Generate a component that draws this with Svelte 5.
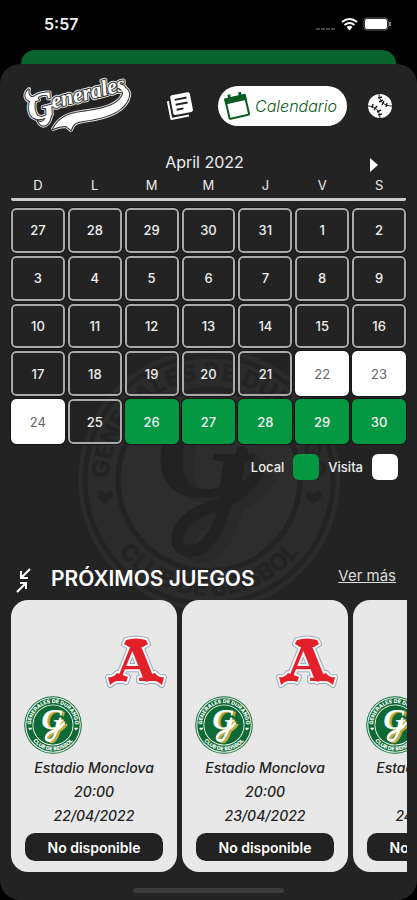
<script>
    const weekdays = ["D", "L", "M", "M", "J", "V", "S"];

    const prevMonth = [27, 28, 29, 30, 31];
    const days = [...prevMonth, ...Array.from({ length: 30 }, (_, i) => i + 1)].map(
        (num, i) => ({ num, type: i < prevMonth.length ? "" : gameType(num) })
    );

    function gameType(num) {
        if (num >= 22 && num <= 24) return "visita";
        if (num >= 26) return "local";
        return "";
    }

    const games = [
        { place: "Estadio Monclova", time: "20:00", date: "22/04/2022" },
        { place: "Estadio Monclova", time: "20:00", date: "23/04/2022" },
        { place: "Estadio Monclova", time: "20:00", date: "24/04/2022" },
    ];
</script>

{#snippet badge(id)}
    <svg class="badge" viewBox="0 0 264 264" aria-hidden="true">
        <defs>
            <path id="{id}-top" d="M32 132a100 100 0 0 1 200 0" />
            <path id="{id}-bottom" d="M16 132a116 116 0 0 0 232 0" />
        </defs>
        <circle class="base" cx="132" cy="132" r="131" />
        <circle class="line" cx="132" cy="132" r="124" />
        <circle class="line" cx="132" cy="132" r="91" />
        <circle class="core" cx="132" cy="132" r="88" />
        <text class="ring"><textPath href="#{id}-top" startOffset="50%">GENERALES DE DURANGO</textPath></text>
        <text class="ring"><textPath href="#{id}-bottom" startOffset="50%">CLUB DE BEISBOL</textPath></text>
        <path class="mark" d="M27 156l-6-6q-3-6 2-7 4 0 5 3 1-3 5-3 5 1 2 7zM236 156l-6-6q-3-6 2-7 4 0 5 3 1-3 5-3 5 1 2 7z" />
        <g class="gold">
            <text class="initial" x="140" y="154">G</text>
            <path class="tail" d="M176 110C162 152 152 212 122 209c-22-4-8-34 18-42 22-6 38-16 52-36" />
        </g>
        <g class="front">
            <text class="initial" x="129" y="148">G</text>
            <path class="tail" d="M165 104C151 146 141 206 111 203c-22-4-8-34 18-42 22-6 38-16 52-36" />
        </g>
    </svg>
{/snippet}

<div class="phone">
    <div class="status">
        <span class="clock">5:57</span>
        <svg class="status-icons" viewBox="0 0 76 16" aria-hidden="true">
            <path d="M1 13h4M6 13h4M11 13h4M16 13h4" stroke="#444" stroke-width="2" />
            <path d="M27 6q7.500-6 15 0M29.500 9q5-4 10 0" fill="none" stroke="#fff" stroke-width="2" />
            <path d="M31.500 11q3-2.500 6 0l-3 3.500z" fill="#fff" />
            <rect x="49" y="2" width="24" height="12" rx="3" fill="none" stroke="#666" />
            <rect x="50" y="3" width="22" height="10" rx="2" fill="#fff" />
            <path d="M75 6v4" stroke="#888" stroke-width="2" />
        </svg>
    </div>
    <div class="peek"></div>

    <main class="sheet">
        <header>
            <svg class="logo" viewBox="0 0 108 54" role="img" aria-label="Generales">
                <defs>
                    <g id="wordmark">
                        <path d="M29 50c6-11 14-15 28-17 23-3 38-7 42-18 0-4-3-6-7-7 9-2 14 3 13 9-3 15-22 22-46 25-6 1-10 2-12 9l-5-4c-5 0-9 1-13 3z" />
                        <g transform="rotate(-14 8 44)">
                            <text x="7" y="42" font-size="37">G</text>
                            <text x="32" y="35" font-size="22">enerales</text>
                        </g>
                        <path d="M5 10c-8 7-2 16 10 11l-2-3c-7 2-10-3-8-8zM27 34c0 12-9 17-13 8 4 3 8-1 9-8z" />
                    </g>
                </defs>
                <use href="#wordmark" class="halo" />
                <use href="#wordmark" class="edge" />
                <use href="#wordmark" class="face" />
            </svg>

            <nav>
                <button class="icon" aria-label="Noticias">
                    <svg viewBox="0 0 30 30" width="30" height="30">
                        <g transform="rotate(-11 15 15)">
                            <path d="M4 8v18h18" fill="none" stroke="#fff" stroke-width="2" stroke-linejoin="round" />
                            <rect x="7" y="3" width="20" height="20" rx="2" fill="#fff" />
                            <path d="M11 8h12M11 13h12M11 18h7" stroke="#232323" stroke-width="2" />
                        </g>
                    </svg>
                </button>
                <button class="pill">
                    <svg viewBox="0 0 28 28" width="28" height="28" aria-hidden="true">
                        <g transform="rotate(-13 14 14)">
                            <rect x="4" y="5" width="20" height="20" rx="1" fill="none" stroke="#0a5c22" stroke-width="2" />
                            <path d="M3 4h22v6H3zM7 1h3v4H7zM18 1h3v4h-3z" fill="#0a5c22" />
                        </g>
                    </svg>
                    Calendario
                </button>
                <button class="icon" aria-label="Equipo">
                    <svg viewBox="0 0 26 26" width="26" height="26">
                        <circle cx="13" cy="13" r="12" fill="#fff" />
                        <g fill="none" stroke="#232323">
                            <path d="M12 1c0 7 5 12 13 12M1 13c7 0 12 5 12 12" />
                            <path d="M11 5l4-1M12 9l4-2M15 12l2-4M19 14l1-4M5 15l1-4M7 17l3-4M10 19l4-2M11 22l4-1" stroke-width="1.500" />
                        </g>
                    </svg>
                </button>
            </nav>
        </header>

        <div class="watermark">{@render badge("wm")}</div>

        <section class="calendar">
            <div class="month">
                <h2>April 2022</h2>
                <button class="next" aria-label="Mes siguiente">
                    <svg viewBox="0 0 8 14" width="8" height="14"><path d="M0 0l8 7-8 7z" fill="#fff" /></svg>
                </button>
            </div>
            <div class="weekdays">
                {#each weekdays as day}
                    <span>{day}</span>
                {/each}
            </div>
            <div class="days">
                {#each days as day}
                    <button class="day {day.type}">{day.num}</button>
                {/each}
            </div>
            <div class="legend">
                <span>Local</span>
                <i class="swatch local"></i>
                <span>Visita</span>
                <i class="swatch visita"></i>
            </div>
        </section>

        <section class="upcoming">
            <div class="heading">
                <button class="collapse" aria-label="Contraer">
                    <svg viewBox="0 0 16 26" width="16" height="26">
                        <path d="M14 2L6 10M5 4v7h7M1 25l8-8M4 16h6v6" fill="none" stroke="#fff" stroke-width="2" />
                    </svg>
                </button>
                <h1>PRÓXIMOS JUEGOS</h1>
                <a href="#juegos">Ver más</a>
            </div>
            <div class="cards" id="juegos">
                {#each games as game, i}
                    <article class="card">
                        <div class="teams">
                            <svg class="rival" viewBox="0 0 62 54" role="img" aria-label="Acereros">
                                <defs>
                                    <g id="rival{i}">
                                        <text x="31" y="45">A</text>
                                        <path d="M21 4q10-3 20 0l2 4-5 3H24l-5-3zM12 37c-3 4-6 5-9 4l2 8 4-3c4-2 8-2 12 0l2-5zM50 37c3 4 6 5 9 4l-2 8-4-3c-4-2-8-2-12 0l-2-5z" />
                                    </g>
                                </defs>
                                <use href="#rival{i}" class="rival-out" />
                                <use href="#rival{i}" class="rival-mid" />
                                <use href="#rival{i}" class="rival-in" />
                            </svg>
                            <div class="home">{@render badge("team" + i)}</div>
                        </div>
                        <p>{game.place}</p>
                        <p>{game.time}</p>
                        <p>{game.date}</p>
                        <button class="tickets">No disponible</button>
                    </article>
                {/each}
            </div>
        </section>

        <div class="home-bar"></div>
    </main>
</div>

<style>
    :global(body) {
        margin: 0;
        background: #000;
    }

    .phone {
        min-height: 100vh;
        display: flex;
        flex-direction: column;
        background: #000;
        color: #eee;
        font-family: Inter, "Liberation Sans", sans-serif;
        overflow: hidden;
    }

    button {
        border: none;
        padding: 0;
        margin: 0;
        background: none;
        color: inherit;
        font-family: inherit;
        cursor: pointer;
    }

    svg {
        display: block;
        flex: none;
    }

    h1, h2, p {
        margin: 0;
    }

    .status {
        height: 50px;
        box-sizing: border-box;
        padding: 0 26px 2px 44px;
        display: flex;
        justify-content: space-between;
        align-items: center;
    }

    .clock {
        font-size: 16px;
        font-weight: 600;
    }

    .status-icons {
        width: 76px;
        height: 16px;
    }

    .peek {
        height: 14px;
        margin: 0 21px;
        border-radius: 16px 16px 0 0;
        background: #0a6430;
    }

    .sheet {
        position: relative;
        flex: 1;
        display: flex;
        flex-direction: column;
        background: #232323;
        border-radius: 20px;
    }

    header {
        height: 84px;
        box-sizing: border-box;
        padding: 0 24px;
        display: flex;
        align-items: center;
        justify-content: space-between;
    }

    .logo {
        width: 108px;
        height: 54px;
        overflow: visible;
    }

    .logo text {
        font-family: "Liberation Serif", serif;
        font-style: italic;
        font-weight: 700;
    }

    .halo {
        fill: #ddd;
        stroke: #ddd;
        stroke-width: 4;
        stroke-linejoin: round;
    }

    .edge {
        fill: #333;
        stroke: #333;
        stroke-width: 2;
    }

    .face {
        fill: #fff;
        stroke: none;
    }

    nav {
        display: flex;
        align-items: center;
        gap: 20px;
    }

    nav .icon:first-child {
        margin-right: 3px;
    }

    .pill {
        display: flex;
        align-items: center;
        gap: 4px;
        height: 40px;
        padding: 0 10px 0 5px;
        border-radius: 20px;
        background: #fff;
        color: #0a5c22;
        font-size: 16px;
        font-style: italic;
        font-weight: 300;
    }

    .watermark {
        position: absolute;
        top: 284px;
        left: 50%;
        width: 264px;
        margin-left: -132px;
        --base: #2b2b2b;
        --line: #232323;
        --core: #2d2d2d;
        --ring: #232323;
        --front: #222;
        --gold: #292929;
    }

    .badge {
        width: 100%;
    }

    .base {
        fill: var(--base);
    }

    .line {
        fill: none;
        stroke: var(--line);
        stroke-width: 5;
    }

    .core {
        fill: var(--core);
    }

    .ring {
        fill: var(--ring);
        font-size: 24px;
        font-weight: 800;
        text-anchor: middle;
    }

    .mark {
        fill: var(--ring);
    }

    .initial {
        font-family: "Liberation Serif", serif;
        font-size: 138px;
        font-style: italic;
        font-weight: 700;
        text-anchor: middle;
    }

    .front {
        fill: var(--front);
        stroke: var(--front);
    }

    .gold {
        fill: var(--gold);
        stroke: var(--gold);
    }

    .tail {
        fill: none;
        stroke-width: 12;
        stroke-linecap: round;
    }

    .calendar,
    .upcoming {
        position: relative;
    }

    .calendar {
        padding: 0 11px;
    }

    .month {
        display: grid;
        grid-template-columns: 1fr auto 1fr;
        align-items: center;
        height: 28px;
        padding-right: 8px;
    }

    h2 {
        grid-column: 2;
        font-size: 16px;
        font-weight: 400;
    }

    .next {
        justify-self: end;
        margin-right: 20px;
        padding-top: 6px;
    }

    .weekdays {
        display: grid;
        grid-template-columns: repeat(7, 1fr);
        gap: 3px;
        height: 22px;
        line-height: 19px;
        border-bottom: 3px solid #ccc;
        border-radius: 2px;
        font-size: 13px;
        text-align: center;
    }

    .days {
        display: grid;
        grid-template-columns: repeat(7, 1fr);
        grid-auto-rows: 1fr;
        gap: 3px;
        height: 236px;
        margin-top: 7px;
    }

    .day {
        border: 2px solid #aaa;
        border-radius: 5px;
        outline: 1px solid #151515;
        font-size: 13px;
        font-weight: 500;
    }

    .local {
        background: #049843;
        border-color: #049843;
    }

    .visita {
        background: #fff;
        border-color: #fff;
    }

    .day.visita {
        color: #666;
        font-weight: 400;
    }

    .legend {
        display: flex;
        justify-content: flex-end;
        align-items: center;
        gap: 9px;
        padding: 10px 8px 0 0;
        font-size: 13px;
        font-weight: 500;
    }

    .swatch {
        width: 26px;
        height: 26px;
        border-radius: 6px;
    }

    .upcoming {
        margin-top: 80px;
    }

    .heading {
        display: flex;
        align-items: center;
        height: 36px;
        padding: 0 21px 4px 16px;
    }

    .collapse {
        padding-top: 4px;
    }

    h1 {
        margin-left: 19px;
        font-size: 21px;
        font-weight: 600;
        color: #fff;
    }

    a {
        margin-left: auto;
        padding-bottom: 6px;
        color: #ddd;
        font-size: 15px;
        font-weight: 400;
    }

    .cards {
        display: flex;
        gap: 5px;
        margin: 0 10px 0 11px;
        overflow: hidden;
    }

    .card {
        flex: none;
        width: 166px;
        box-sizing: border-box;
        padding: 36px 14px 11px;
        border-radius: 17px;
        background: #e8e8e8;
        color: #222;
        text-align: center;
    }

    .teams {
        display: flex;
        flex-direction: column;
        gap: 6px;
        height: 120px;
        margin: 0 -4px 0 -1px;
    }

    .rival {
        align-self: flex-end;
        width: 62px;
        height: 54px;
        overflow: visible;
    }

    .rival text {
        font-family: "DejaVu Serif", serif;
        font-size: 54px;
        font-weight: 700;
        text-anchor: middle;
    }

    .rival use {
        stroke-linejoin: round;
    }

    .rival-out {
        fill: #9aabb8;
        stroke: #9aabb8;
        stroke-width: 6;
    }

    .rival-mid {
        fill: #f4f6f8;
        stroke: #f4f6f8;
        stroke-width: 4;
    }

    .rival-in {
        fill: #e3202a;
    }

    .home {
        width: 58px;
        --base: #0d6a34;
        --line: #e8eee6;
        --core: #0d6a34;
        --ring: #fff;
        --front: #fff;
        --gold: #c5ab3c;
    }

    p {
        font-size: 14px;
        font-style: italic;
        font-weight: 500;
        line-height: 24px;
        white-space: nowrap;
    }

    .tickets {
        width: 100%;
        height: 28px;
        margin-top: 5px;
        border-radius: 10px;
        background: #222;
        color: #fff;
        font-size: 14px;
        font-weight: 600;
    }

    .home-bar {
        width: 36%;
        height: 5px;
        margin: auto auto 7px;
        border-radius: 3px;
        background: #3c3c3c;
    }
</style>
